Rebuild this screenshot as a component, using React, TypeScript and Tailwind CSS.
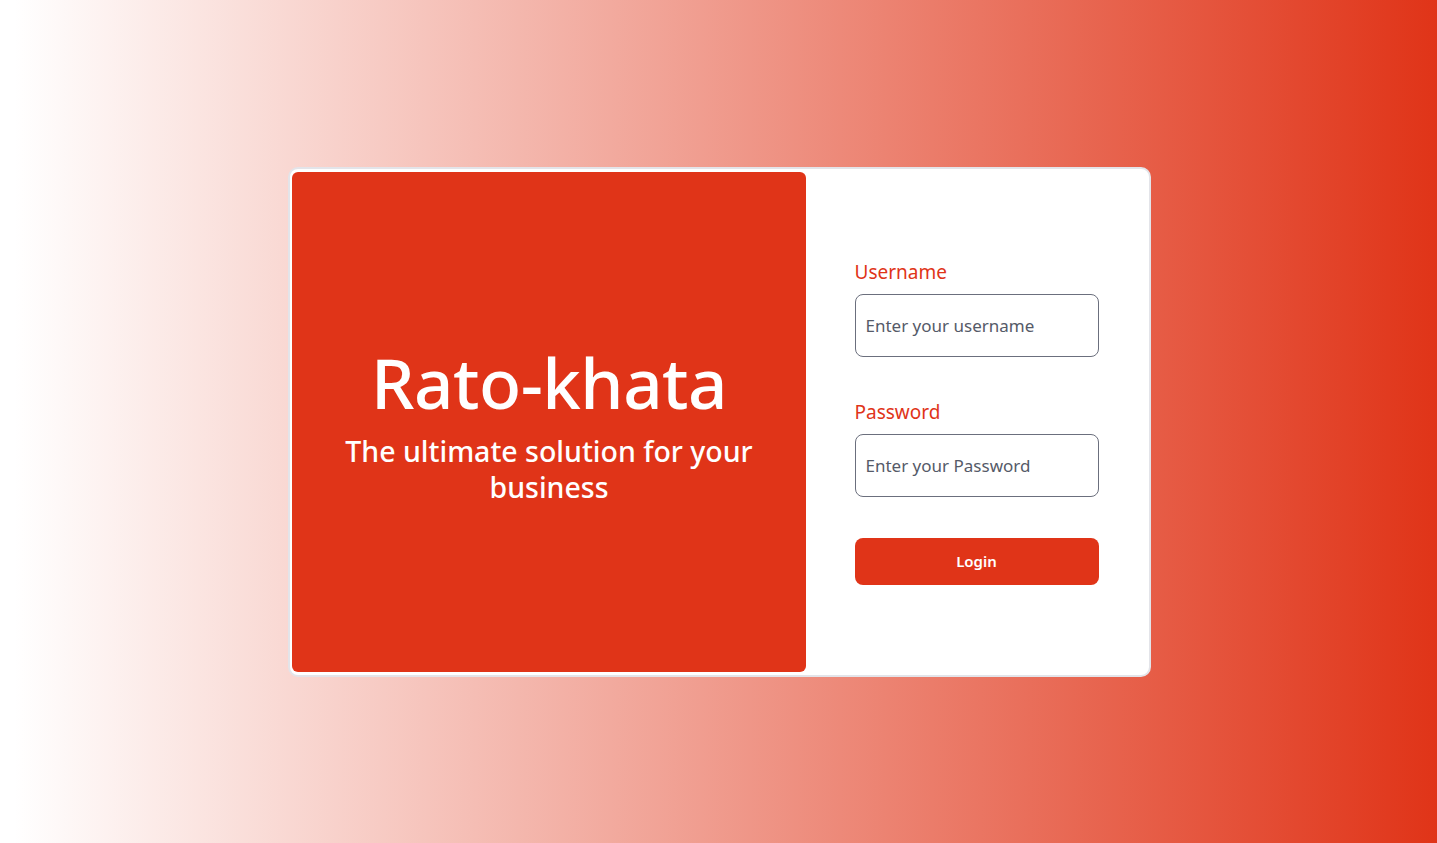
import React from "react";

const App = () => {
  return (
    <div className="min-h-screen w-full flex items-center justify-center bg-[linear-gradient(to_right,#ffffff_1%,#e03418)] font-['Noto_Sans',sans-serif]">
      <div className="flex w-[863px] h-[510px] ml-[2px] bg-white border-2 border-[#e3e4e9] rounded-[10px] px-[2px] py-[3px]">
        {/* Brand panel */}
        <div className="w-[514px] h-full bg-[#e03418] rounded-md flex flex-col items-center justify-center text-white text-center pt-[6px]">
          <h1 className="text-[69px] leading-[76px] font-medium tracking-[-0.5px] mb-[13px]">Rato-khata</h1>
          <p className="text-[28.5px] leading-[36px] font-medium w-[420px]">
            The ultimate solution for your business
          </p>
        </div>

        {/* Login form */}
        <div className="flex-1 flex items-center justify-center">
          <form className="w-[244px] flex flex-col" onSubmit={(e) => e.preventDefault()}>
            <label className="text-[19px] leading-7 text-[#e03418] mb-[8px]">Username</label>
            <input
              type="text"
              placeholder="Enter your username"
              className="h-[63px] border border-[#6b6f7d] rounded-lg px-[10px] text-[17px] text-[#4b4f5c] placeholder:text-[#555a68] outline-none"
            />
            <label className="text-[19px] leading-7 text-[#e03418] mt-[41px] mb-[8px]">Password</label>
            <input
              type="password"
              placeholder="Enter your Password"
              className="h-[63px] border border-[#6b6f7d] rounded-lg px-[10px] text-[17px] text-[#4b4f5c] placeholder:text-[#555a68] outline-none"
            />
            <button
              type="submit"
              className="mt-[41px] h-[47px] bg-[#e03418] rounded-lg text-white text-[15px] font-semibold"
            >
              Login
            </button>
          </form>
        </div>
      </div>
    </div>
  );
};

export default App;
